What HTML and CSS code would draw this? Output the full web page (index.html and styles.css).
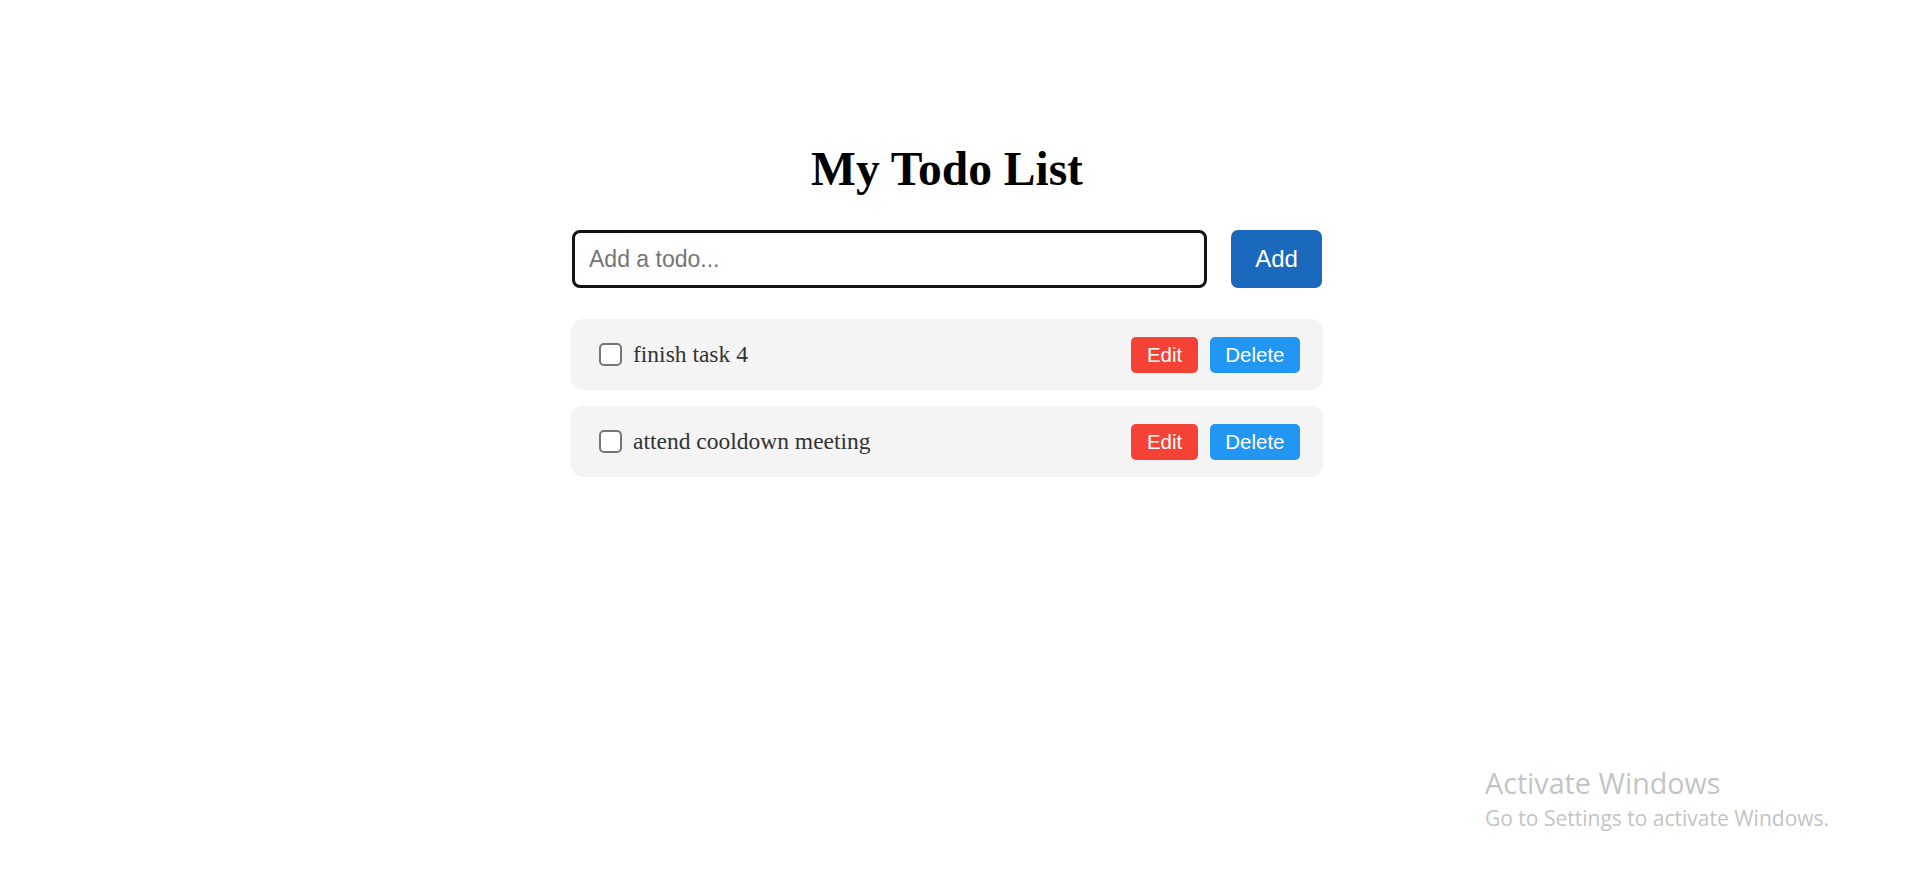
FILE: index.html
```html
<!DOCTYPE html>
<html lang="en">
<head>
<meta charset="utf-8">
<title>My Todo List</title>
<link rel="stylesheet" href="styles.css">
</head>
<body>
<div class="page">
  <div class="app">
    <h1 class="title">My Todo List</h1>
    <form class="add-form">
      <input class="todo-input" type="text" placeholder="Add a todo...">
      <button class="add-btn" type="button">Add</button>
    </form>
    <ul class="todo-list">
      <li class="todo-item">
        <label class="todo-label">
          <span class="check"></span>
          <span class="todo-text">finish task 4</span>
        </label>
        <div class="actions">
          <button class="btn btn-edit" type="button">Edit</button>
          <button class="btn btn-delete" type="button">Delete</button>
        </div>
      </li>
      <li class="todo-item">
        <label class="todo-label">
          <span class="check"></span>
          <span class="todo-text">attend cooldown meeting</span>
        </label>
        <div class="actions">
          <button class="btn btn-edit" type="button">Edit</button>
          <button class="btn btn-delete" type="button">Delete</button>
        </div>
      </li>
    </ul>
  </div>
</div>
<div class="watermark">
  <div class="wm-title">Activate Windows</div>
  <div class="wm-sub">Go to Settings to activate Windows.</div>
</div>
</body>
</html>
```

FILE: styles.css
```css
html, body {
  margin: 0;
  padding: 0;
  background: #ffffff;
}

body {
  font-family: "Liberation Serif", "Times New Roman", serif;
  width: 1907px;
  height: 872px;
  overflow: hidden;
}

.page {
  padding: 142px 13px 0 0;
  display: flex;
  justify-content: center;
}

.app {
  width: 752px;
  display: flex;
  flex-direction: column;
}

.title {
  margin: 0;
  font-family: "Liberation Serif", "Times New Roman", serif;
  font-weight: bold;
  font-size: 47.5px;
  line-height: 54px;
  text-align: center;
  color: #000;
}

.add-form {
  margin: 34px 0 0 0;
  display: flex;
  align-items: center;
  gap: 24px;
  padding-left: 1px;
}

.todo-input {
  flex: 1;
  box-sizing: border-box;
  height: 58px;
  border: 3px solid #111;
  border-radius: 8px;
  padding: 0 14px;
  font-family: "Liberation Sans", Arial, sans-serif;
  font-size: 23px;
  color: #222;
  outline: none;
  background: #fff;
}

.todo-input::placeholder {
  color: #757575;
}

.add-btn {
  box-sizing: border-box;
  width: 91px;
  height: 58px;
  border: none;
  border-radius: 7px;
  background: #1a69bd;
  color: #fff;
  font-family: "Liberation Sans", Arial, sans-serif;
  font-size: 24px;
  padding: 0;
  margin-right: 1px;
}

.todo-list {
  list-style: none;
  margin: 31px 0 0 0;
  padding: 0;
  display: flex;
  flex-direction: column;
  gap: 16px;
}

.todo-item {
  box-sizing: border-box;
  height: 71px;
  background: #f4f4f4;
  border-radius: 12px;
  display: flex;
  align-items: center;
  justify-content: space-between;
  padding: 0 23px 0 28px;
}

.todo-label {
  display: flex;
  align-items: center;
  gap: 11px;
}

.check {
  box-sizing: border-box;
  width: 23px;
  height: 23px;
  border: 2px solid #767676;
  border-radius: 5px;
  background: #fff;
}

.todo-text {
  font-family: "Liberation Serif", "Times New Roman", serif;
  font-size: 23.5px;
  color: #333;
}

.actions {
  display: flex;
  gap: 12px;
}

.btn {
  box-sizing: border-box;
  height: 36px;
  border: none;
  border-radius: 5px;
  color: #fff;
  font-family: "Liberation Sans", Arial, sans-serif;
  font-size: 20.5px;
  padding: 0 15.5px;
}

.btn-edit {
  background: #f44336;
}

.btn-delete {
  background: #2196f3;
}

.watermark {
  position: absolute;
  left: 1485px;
  top: 765px;
  color: #c4c4c4;
  font-family: "Open Sans", "Noto Sans", sans-serif;
}

.wm-title {
  font-size: 28.7px;
  line-height: 36px;
}

.wm-sub {
  font-size: 21px;
  line-height: 28px;
  margin-top: 3px;
}
```
